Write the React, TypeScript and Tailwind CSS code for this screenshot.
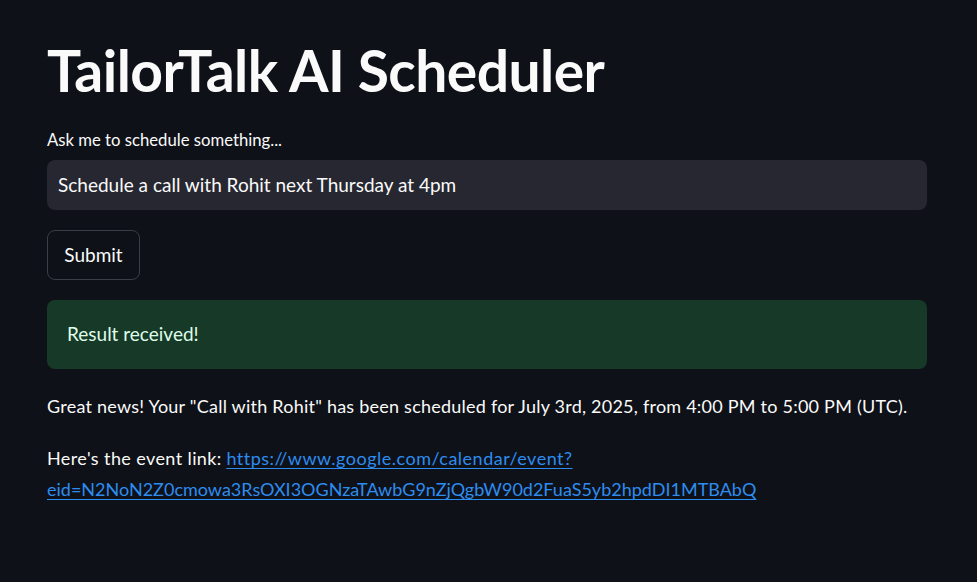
import React from "react";

export default function App() {
  return (
    <div
      className="min-h-[582px] w-full bg-[#0e1117] text-[#fafafa]"
      style={{ fontFamily: "Lato, 'Noto Sans', sans-serif" }}
    >
      <div className="pl-[47px] pr-[50px] pt-[38px]">
        <h1 className="text-[57px] font-bold leading-[64px] tracking-[-0.55px]">TailorTalk AI Scheduler</h1>
        <div className="mt-[28px] text-[16.7px] leading-[20px]">Ask me to schedule something...</div>
        <div className="mt-[10px] flex h-[50px] items-center rounded-[8px] bg-[#262730] px-[11px] text-[19px]">
          Schedule a call with Rohit next Thursday at 4pm
        </div>
        <button className="mt-[20px] flex h-[50px] w-[93px] items-center justify-center rounded-[8px] border border-[#3b3d47] bg-[#0e1117] text-[19px] text-[#fafafa]">
          Submit
        </button>
        <div className="mt-[20px] flex h-[69px] items-center rounded-[8px] bg-[#173928] px-[20px] text-[19px] text-[#dffde9]">
          Result received!
        </div>
        <p className="mt-[22px] text-[18px] leading-[31px] tracking-[0.23px]">
          Great news! Your "Call with Rohit" has been scheduled for July 3rd, 2025, from 4:00 PM to 5:00 PM (UTC).
        </p>
        <p className="mt-[21px] text-[18px] leading-[31px]">
          <span className="tracking-[0.4px]">Here's the event link:</span>{" "}
          <a
            href="#"
            className="text-[#2d8cf0] underline underline-offset-[3px]"
          >
            <span className="tracking-[0.5px]">https://www.google.com/calendar/event?</span><wbr />eid=N2NoN2Z0cmowa3RsOXI3OGNzaTAwbG9nZjQgbW90d2FuaS5yb2hpdDI1MTBAbQ
          </a>
        </p>
      </div>
    </div>
  );
}
